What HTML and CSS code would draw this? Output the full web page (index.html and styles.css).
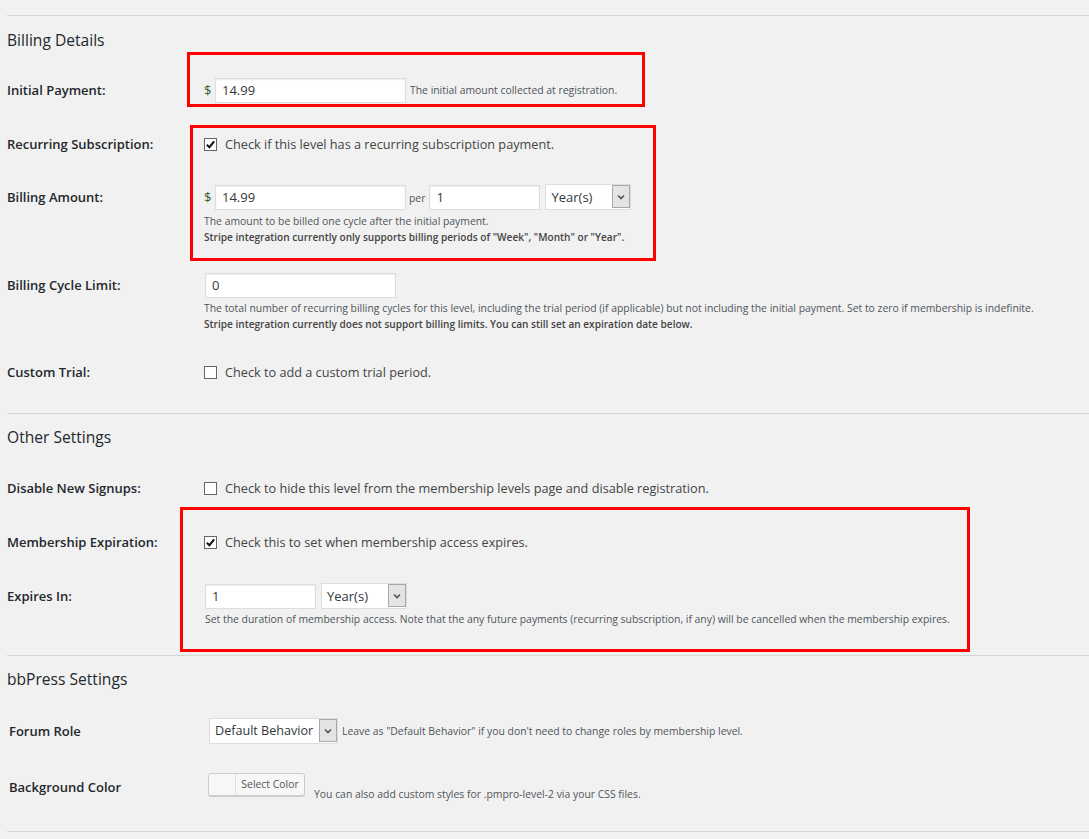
FILE: index.html
```html
<!DOCTYPE html>
<html>
<head>
<meta charset="utf-8">
<link rel="stylesheet" href="styles.css">
</head>
<body>
<div class="page">
  <hr class="sep first">
  <h2 class="heading h-billing">Billing Details</h2>

  <div class="row r-initial">
    <div class="label">Initial Payment:</div>
    <div class="field">
      <div class="line">
        <span class="cur">$</span>
        <span class="input w190">14.99</span>
        <span class="desc-inline">The initial amount collected at registration.</span>
      </div>
    </div>
  </div>

  <div class="row r-gap">
    <div class="label">Recurring Subscription:</div>
    <div class="field">
      <div class="line">
        <span class="check on"><svg viewBox="0 0 12 12" width="11" height="11"><path d="M2 6.2 L4.8 9 L10 2.5" fill="none" stroke="#111" stroke-width="2.2"/></svg></span>
        <span class="check-text">Check if this level has a recurring subscription payment.</span>
      </div>
    </div>
  </div>

  <div class="row r-gap27">
    <div class="label">Billing Amount:</div>
    <div class="field">
      <div class="line">
        <span class="cur">$</span>
        <span class="input w190">14.99</span>
        <span class="per">per</span>
        <span class="input w110">1</span>
        <span class="select w85"><span class="sel-val">Year(s)</span><span class="arrow"><svg viewBox="0 0 8 6" width="8" height="6"><path d="M1 1.5 L4 4.5 L7 1.5" fill="none" stroke="#555" stroke-width="1.6"/></svg></span></span>
      </div>
      <div class="desc d3">
        <p>The amount to be billed one cycle after the initial payment.</p>
        <p class="strong">Stripe integration currently only supports billing periods of "Week", "Month" or "Year".</p>
      </div>
    </div>
  </div>

  <div class="row r-gap27">
    <div class="label">Billing Cycle Limit:</div>
    <div class="field">
      <div class="line">
        <span class="input w190 ml1">0</span>
      </div>
      <div class="desc d2">
        <p>The total number of recurring billing cycles for this level, including the trial period (if applicable) but not including the initial payment. Set to zero if membership is indefinite.</p>
        <p class="strong">Stripe integration currently does not support billing limits. You can still set an expiration date below.</p>
      </div>
    </div>
  </div>

  <div class="row r-gap27">
    <div class="label">Custom Trial:</div>
    <div class="field">
      <div class="line">
        <span class="check"></span>
        <span class="check-text">Check to add a custom trial period.</span>
      </div>
    </div>
  </div>

  <hr class="sep s28">
  <h2 class="heading h13">Other Settings</h2>

  <div class="row r-gap">
    <div class="label">Disable New Signups:</div>
    <div class="field">
      <div class="line">
        <span class="check"></span>
        <span class="check-text">Check to hide this level from the membership levels page and disable registration.</span>
      </div>
    </div>
  </div>

  <div class="row r-gap">
    <div class="label">Membership Expiration:</div>
    <div class="field">
      <div class="line">
        <span class="check on"><svg viewBox="0 0 12 12" width="11" height="11"><path d="M2 6.2 L4.8 9 L10 2.5" fill="none" stroke="#111" stroke-width="2.2"/></svg></span>
        <span class="check-text">Check this to set when membership access expires.</span>
      </div>
    </div>
  </div>

  <div class="row r-gap">
    <div class="label">Expires In:</div>
    <div class="field">
      <div class="line">
        <span class="input w110 ml1">1</span>
        <span class="select w85"><span class="sel-val">Year(s)</span><span class="arrow"><svg viewBox="0 0 8 6" width="8" height="6"><path d="M1 1.5 L4 4.5 L7 1.5" fill="none" stroke="#555" stroke-width="1.6"/></svg></span></span>
      </div>
      <div class="desc d2 narrow">
        <p>Set the duration of membership access. Note that the any future payments (recurring subscription, if any) will be cancelled when the membership expires.</p>
      </div>
    </div>
  </div>

  <hr class="sep s28">
  <h2 class="heading h13">bbPress Settings</h2>

  <div class="row r-gap29">
    <div class="label lbl-bb">Forum Role</div>
    <div class="field">
      <div class="line">
        <span class="select w129 ml4"><span class="sel-val sm">Default Behavior</span><span class="arrow"><svg viewBox="0 0 8 6" width="8" height="6"><path d="M1 1.5 L4 4.5 L7 1.5" fill="none" stroke="#555" stroke-width="1.6"/></svg></span></span>
        <span class="desc-inline">Leave as "Default Behavior" if you don't need to change roles by membership level.</span>
      </div>
    </div>
  </div>

  <div class="row r-gap30">
    <div class="label lbl-bb">Background Color</div>
    <div class="field">
      <div class="color-line">
        <span class="color-btn"><span class="swatch"></span><span class="color-text">Select Color</span></span>
        <span class="desc-inline color-desc">You can also add custom styles for .pmpro-level-2 via your CSS files.</span>
      </div>
    </div>
  </div>

  <hr class="sep s29">

  <div class="mark m1"></div>
  <div class="mark m2"></div>
  <div class="mark m3"></div>
</div>
</body>
</html>
```

FILE: styles.css
```css
html, body {
  margin: 0;
  padding: 0;
  background: #f1f1f1;
}

.page {
  position: relative;
  padding: 15px 0 20px 7px;
  font-family: "Open Sans", "Liberation Sans", sans-serif;
  color: #444;
  min-height: 804px;
}

.sep {
  border: 0;
  border-top: 1px solid #d5d5d5;
  margin: 0;
  height: 0;
}

.sep.s28 { margin-top: 28px; }
.sep.s29 { margin-top: 29px; }

.heading {
  margin: 14px 0 0 0;
  font-size: 15.6px;
  line-height: 20px;
  font-weight: 400;
  color: #23282d;
}

.heading.h13 { margin-top: 13px; }

.row {
  display: flex;
  align-items: flex-start;
}

.r-initial { margin-top: 27px; }
.r-gap { margin-top: 28px; }
.r-gap27 { margin-top: 27px; }
.r-gap29 { margin-top: 29px; }
.r-gap30 { margin-top: 30px; }

.label {
  width: 197px;
  flex: none;
  height: 26px;
  line-height: 26px;
  font-size: 13px;
  font-weight: 600;
  color: #23282d;
}

.lbl-bb {
  padding-left: 2px;
  width: 195px;
}

.field {
  flex: 1;
  min-width: 0;
}

.line {
  display: flex;
  align-items: center;
  height: 26px;
}

.cur {
  font-size: 13px;
  color: #2f5a2f;
  width: 11px;
  flex: none;
}

.input {
  display: block;
  box-sizing: border-box;
  height: 25px;
  line-height: 23px;
  background: #fff;
  border: 1px solid #ddd;
  box-shadow: inset 0 1px 2px rgba(0,0,0,0.07);
  padding: 0 6px;
  font-size: 13px;
  color: #32373c;
  flex: none;
}

.w190 { width: 191px; }
.w110 { width: 111px; }
.ml1 { margin-left: 1px; }
.ml4 { margin-left: 4px; }

.desc-inline {
  font-size: 10.4px;
  color: #50555a;
  margin-left: 4px;
  white-space: nowrap;
}

.per {
  font-size: 10.4px;
  color: #50555a;
  margin: 2px 4px 0 3px;
}

.select {
  display: flex;
  box-sizing: border-box;
  height: 26px;
  margin-left: 5px;
  background: #fff;
  border: 1px solid #ddd;
  flex: none;
  align-items: stretch;
}

.w85 { width: 86px; }
.w129 { width: 129px; }

.sel-val {
  flex: 1;
  padding-left: 5px;
  font-size: 13px;
  line-height: 24px;
  color: #32373c;
  white-space: nowrap;
  overflow: hidden;
}

.sel-val.sm {
  font-size: 12.6px;
}

.arrow {
  width: 16px;
  flex: none;
  margin: 0 0 1px 0;
  background: #e4e4e4;
  border: 1px solid #a8a8a8;
  display: flex;
  align-items: center;
  justify-content: center;
}

.check {
  box-sizing: border-box;
  width: 13px;
  height: 13px;
  border: 1px solid #666;
  background: #fff;
  display: flex;
  align-items: center;
  justify-content: center;
  flex: none;
}

.check-text {
  margin-left: 8px;
  font-size: 12.7px;
  color: #444;
  white-space: nowrap;
}

.desc p {
  margin: 0;
  font-size: 10.4px;
  line-height: 16px;
  color: #50555a;
  white-space: nowrap;
}

.desc p.strong {
  font-weight: 600;
  font-size: 10.1px;
  color: #444;
}

.d3 { margin-top: 3px; }
.d2 { margin-top: 2px; }

.narrow p {
  padding-left: 1px;
}

.color-line {
  display: flex;
  align-items: flex-start;
  height: 28px;
}

.color-btn {
  margin: -1px 0 0 4px;
  display: flex;
  box-sizing: border-box;
  width: 97px;
  height: 23px;
  border: 1px solid #ccc;
  border-radius: 3px;
  background: #f7f7f7;
  box-shadow: 0 1px 0 #ccc;
  overflow: hidden;
}

.swatch {
  width: 26px;
  border-right: 1px solid #ddd;
  background: #f7f7f7;
}

.color-text {
  flex: 1;
  text-align: center;
  font-size: 10.4px;
  line-height: 20px;
  color: #555;
}

.color-desc {
  margin: 12px 0 0 9px;
  line-height: 16px;
}

.mark {
  position: absolute;
  box-sizing: border-box;
  border: 3px solid #f00;
  pointer-events: none;
}

.m1 { left: 187px; top: 52px; width: 458px; height: 55px; }
.m2 { left: 190px; top: 125px; width: 466px; height: 136px; }
.m3 { left: 180px; top: 507px; width: 790px; height: 145px; }
```
